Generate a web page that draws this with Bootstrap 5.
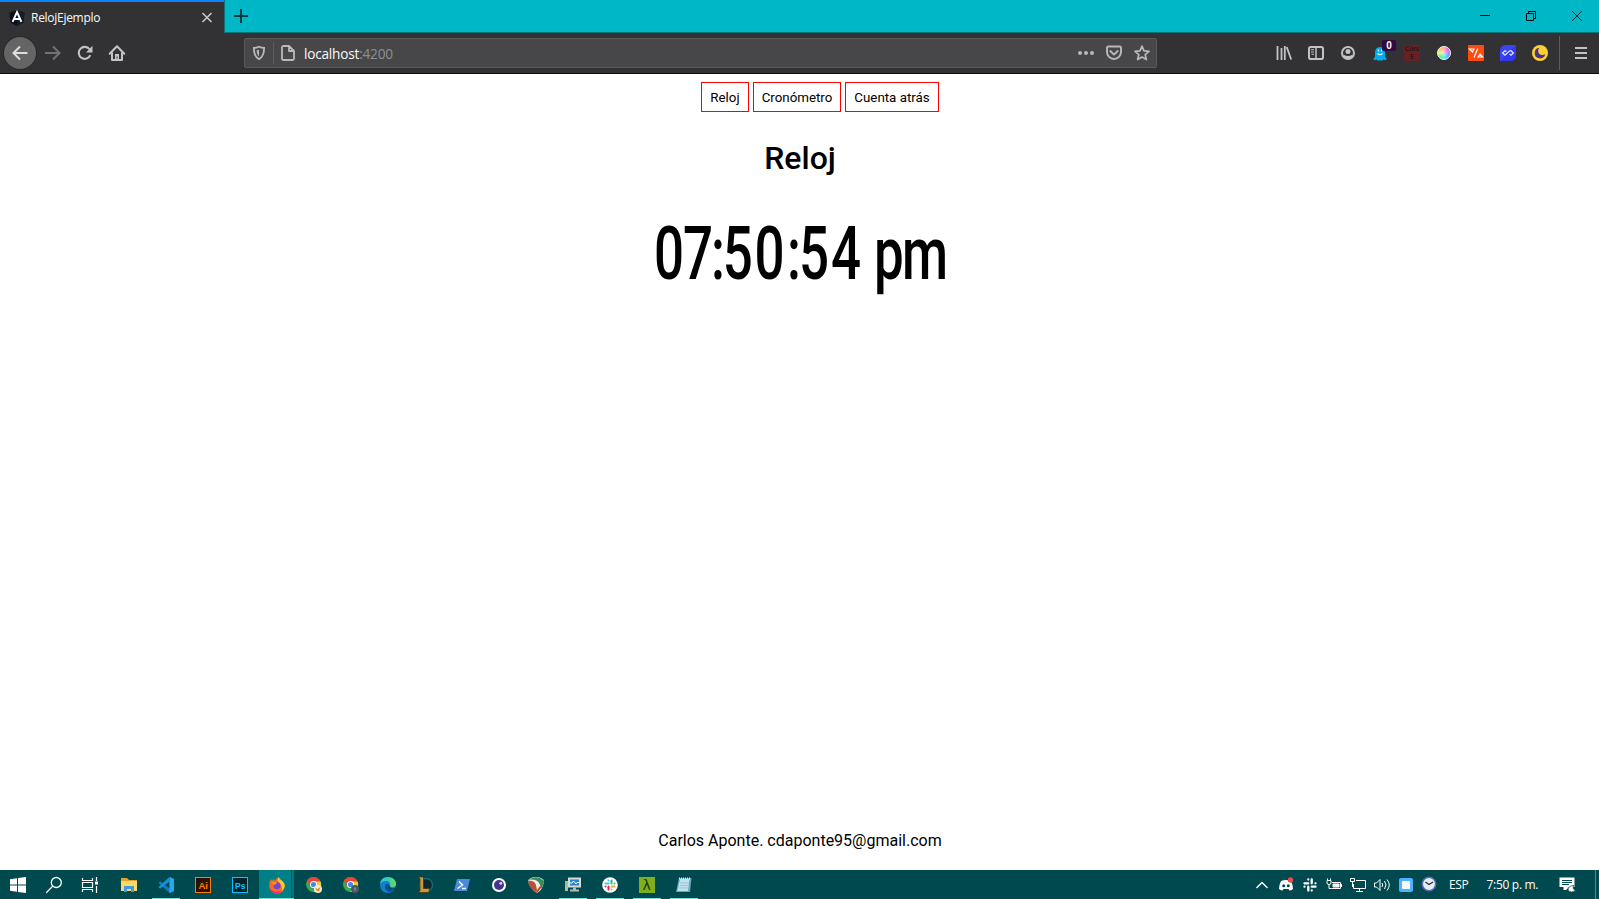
<!DOCTYPE html>
<html lang="es">
<head>
<meta charset="utf-8">
<title>RelojEjemplo</title>
<link href="https://cdn.jsdelivr.net/npm/bootstrap@5.3.0/dist/css/bootstrap.min.css" rel="stylesheet">
<script src="https://cdn.jsdelivr.net/npm/bootstrap@5.3.0/dist/js/bootstrap.bundle.min.js"></script>
<style>
body{font-family:Roboto,"Liberation Sans",sans-serif;color:#000;background:#fff}
svg{display:block;flex:none;overflow:visible}
.ui{font-family:"Open Sans","Noto Sans",sans-serif}
.titlebar{height:33px;background:#00b7c7;border-bottom:1px solid #107177}
.tab-active{width:224px;height:33px;background:#323234;border-top:2px solid #0a84ff;color:#f9f9fa;font-size:12px;padding-left:9px}
.tab-name{letter-spacing:-.28px;margin-left:6px;line-height:30px}
.tab-close{margin-right:7px}
.newtab{width:33px;height:32px;border-left:1px solid #107177}
.win-btn{width:46px;height:32px}
.toolbar{height:41px;background:#323234;border-bottom:1px solid #0c0c0d;color:#c3c3c5}
.tool{width:32px;height:32px;flex:none}
.tool-wide{width:33px;padding-right:1px}
.back-btn{background:#656566;border-radius:50%;box-shadow:0 0 0 1px #29292b}
.urlbar{width:913px;height:30px;margin-left:111px;background:#474749;border:1px solid #5a5a5c;border-radius:2px;color:#b9b9bb}
.url-text{font-size:13.600px;letter-spacing:-.2px;line-height:28px;color:#f9f9fa;margin-left:9px;padding-top:1px}
.url-text span{color:#8f8f91}
.rule{width:1px;background:#5d5d5f;flex:none}
.count{position:absolute;left:18px;top:3px;width:14px;height:11px;background:#300a40;border-radius:2px;color:#fff;font:bold 10px/11px "Liberation Sans",sans-serif;text-align:center}
.cors{width:16px;height:16px;background:#652224;color:#180b0c;font:6.500px/8px "DejaVu Sans",sans-serif;letter-spacing:-.2px;text-align:center}
.menu-btn{border:1px solid #f00;border-radius:0;background:#fff;color:#000;font-size:13.333px;line-height:16px;padding:7px 0 5px;height:30px;white-space:nowrap}
.menu-row{padding:8px 0 0 40px;gap:4px}
.page-title{font-size:32px;font-weight:500;line-height:38px;margin:27px 0 0}
.face{margin-top:32px}
.author{font-size:16px;line-height:19px;margin-bottom:20px}
.page{padding-left:1px}
.taskbar{height:29px;background:#004a4f;color:#fff;font-size:12px}
.task{width:37px;height:29px;flex:none;padding-right:1px}
.task-narrow{width:36px;padding-right:0}
.running{background:linear-gradient(#76e3e3,#76e3e3) 4px 28px/28px 1px no-repeat}
.current{background:linear-gradient(#76e3e3,#76e3e3) 0 28px/35px 1px no-repeat,linear-gradient(90deg,#008086 32px,#00585c 32px,#00585c 33px,#00777c 33px) 0 0/35px 29px no-repeat}
.tray{width:24px;height:29px;flex:none}
</style>
</head>
<body>
<div class="d-flex flex-column vh-100 overflow-hidden">

<header class="ui titlebar d-flex">
  <div class="tab-active d-flex align-items-center">
    <svg width="16" height="16" viewBox="0 0 16 16"><path d="M8 0l7.500 2.700-1.100 10L8 16l-6.400-3.300L.5 2.700z" fill="#0b1019"/><path d="M8 0l7.500 2.700-1.100 10L8 16z" fill="#161d2a"/><path d="M3.600 11.800L8 2l4.400 9.800M5.500 9h5" fill="none" stroke="#fff" stroke-width="1.900"/></svg>
    <span class="tab-name flex-grow-1">RelojEjemplo</span>
    <svg class="tab-close" width="20" height="20" viewBox="0 0 20 20"><path d="M5.500 5l9 9m0-9l-9 9" stroke="#c8c8ca" stroke-width="1.600"/></svg>
  </div>
  <div class="newtab d-flex align-items-center justify-content-center"><svg width="14" height="14" viewBox="0 0 14 14"><path d="M0 7h14M7 0v14" stroke="#06383c" stroke-width="1.900"/></svg></div>
  <div class="d-flex ms-auto">
    <div class="win-btn d-flex align-items-center justify-content-center"><svg width="10" height="10"><path d="M1 4.500h10" stroke="#000"/></svg></div>
    <div class="win-btn d-flex align-items-center justify-content-center"><svg width="10" height="10"><path d="M1.500 2.500h7v7h-7zM3.500 2.500v-2h7v7h-2" fill="none" stroke="#000"/></svg></div>
    <div class="win-btn d-flex align-items-center justify-content-center"><svg width="10" height="10"><path d="M1 0l10 10M11 0L1 10" stroke="#00282b"/></svg></div>
  </div>
</header>

<nav class="ui toolbar d-flex align-items-center flex-shrink-0">
  <div class="tool back-btn d-flex align-items-center justify-content-center ms-1"><svg width="16" height="16" viewBox="0 0 16 16"><path d="M15.500 8H1.500M8 1.500L1.500 8 8 14.500" fill="none" stroke="#dededf" stroke-width="2"/></svg></div>
  <div class="tool tool-wide d-flex align-items-center justify-content-center"><svg width="16" height="16" viewBox="0 0 16 16"><path d="M1 8h14M9 1.500L15.500 8 9 14.500" fill="none" stroke="#737375" stroke-width="2"/></svg></div>
  <div class="tool d-flex align-items-center justify-content-center"><svg width="16" height="16" viewBox="0 0 16 16"><path d="M13.300 10.200A6 6 0 1 1 12.500 4.200" fill="none" stroke="currentColor" stroke-width="2.100"/><path d="M15.500 .8v6.700H9z" fill="currentColor"/></svg></div>
  <div class="tool d-flex align-items-center justify-content-center"><svg width="16" height="16" viewBox="0 0 16 16"><path d="M.7 8.700L8 1.200l7.300 7.500M3 7.500V15h10V7.500" fill="none" stroke="currentColor" stroke-width="2" stroke-linejoin="round" stroke-linecap="round"/><path d="M6 9h4v6H6z" fill="currentColor"/><path d="M8 11.500v2" stroke="#323234"/></svg></div>

  <div class="urlbar d-flex align-items-center">
    <svg class="ms-2" width="12" height="14" viewBox="0 0 12 14"><path d="M6 .8C4 1.700 2 2 .9 2c0 5 .6 8.800 5.100 11.100C10.500 10.800 11.100 7 11.100 2 10 2 8 1.700 6 .8z" fill="none" stroke="currentColor" stroke-width="1.800"/><path d="M6 3.700v6.500C4.200 9 3.700 7 3.700 4.200z" fill="currentColor"/></svg>
    <div class="rule ms-2" style="height:22px"></div>
    <svg style="margin-left:7px" width="14" height="16" viewBox="0 0 14 16"><path d="M1 2.500Q1 1 2.500 1H8l5 5v7.500q0 1.500-1.500 1.500h-9Q1 15 1 13.500zM8 1v5h5" fill="none" stroke="currentColor" stroke-width="1.800" stroke-linejoin="round"/></svg>
    <div class="url-text flex-grow-1">localhost<span>:4200</span></div>
    <svg width="16" height="16" viewBox="0 0 16 16" fill="currentColor"><circle cx="2" cy="8" r="2"/><circle cx="8" cy="8" r="2"/><circle cx="14" cy="8" r="2"/></svg>
    <svg style="margin:0 12px" width="16" height="16" viewBox="0 0 16 16" fill="none" stroke="currentColor" stroke-width="1.900"><path d="M2.200 1.500h11.600q1.200 0 1.200 1.200V7A7 7 0 0 1 1 7V2.700Q1 1.500 2.200 1.500z"/><path d="M4.300 6L8 9.600 11.700 6" stroke-linecap="round" stroke-linejoin="round"/></svg>
    <svg style="margin-right:6px" width="16" height="16" viewBox="0 0 16 16"><path d="M8 1.200l2 4.700 5 .4-3.800 3.300 1.200 5L8 12l-4.400 2.600 1.200-5L1 6.300l5-.4z" fill="none" stroke="currentColor" stroke-width="1.700" stroke-linejoin="round"/></svg>
  </div>

  <div class="d-flex align-items-center ms-auto">
    <div class="tool d-flex align-items-center justify-content-center"><svg width="16" height="16" viewBox="0 0 16 16"><path d="M1.500 1v14M5.500 3v12M8.800 1v14M10.700 2l4.500 12.500" stroke="currentColor" stroke-width="1.800" fill="none"/></svg></div>
    <div class="tool d-flex align-items-center justify-content-center"><svg width="16" height="16" viewBox="0 0 16 16"><rect x="1" y="2" width="14" height="12" rx="1.800" fill="none" stroke="currentColor" stroke-width="2"/><path d="M8 2v12" stroke="currentColor" stroke-width="1.500"/><path d="M3 4.700h3M3 7h3M3.500 9.300H6" stroke="currentColor"/></svg></div>
    <div class="tool d-flex align-items-center justify-content-center"><svg width="14" height="14" viewBox="0 0 14 14"><circle cx="7" cy="7" r="6" fill="none" stroke="currentColor" stroke-width="2"/><circle cx="7" cy="5.500" r="2.500" fill="currentColor"/><path d="M2.500 8.500Q7 11.500 11.500 8.500L11 11.500 7 13 3 11.500z" fill="currentColor"/></svg></div>
    <div class="tool d-flex align-items-center justify-content-center position-relative"><svg width="14" height="15" viewBox="0 0 14 15"><path d="M2 7Q2 1 7 1t5 6v4q2 1 1.500 2.500-1.500 1-3 0-1.500 2-3.500.5-2 1.500-3.500-.5-1.500 1-3 0Q0 12 2 11z" fill="#00aef0"/><path d="M5.500 3.500v2M8.500 3.500v2M4.500 7.500Q7 9.800 9.500 7.500" stroke="#e8fbff" stroke-width="1.200" fill="none"/></svg><span class="count">0</span></div>
    <div class="tool d-flex align-items-center justify-content-center"><div class="cors">Cors<br>E</div></div>
    <div class="tool d-flex align-items-center justify-content-center"><div class="rounded-circle" style="width:14px;height:14px;border:1px solid #fff;background:radial-gradient(#fff9 0 10%,#fff0 75%),conic-gradient(#f98,#f4e,#96ff,#4af,#3ee,#4e6,#cf5,#fb5,#f98)"></div></div>
    <div class="tool d-flex align-items-center justify-content-center"><svg width="16" height="16" viewBox="0 0 16 16"><rect width="16" height="16" rx="1" fill="#ff4a10"/><path d="M1.500 4h4.500L4.500 7zM9.800 3.500L6 12.500M10 12L12 9l2.500 3z" fill="none" stroke="#fff" stroke-width="1.200"/></svg></div>
    <div class="tool d-flex align-items-center justify-content-center"><svg width="16" height="16" viewBox="0 0 16 16"><path d="M6 0h10v10q0 6-6 6H0V6q0-6 6-6z" fill="#3b45f3"/><path d="M16 0v10q0 6-6 6H0z" fill="#2a2de8" opacity=".55"/><path d="M6.500 6.500L5 5.800 2.600 8 5 10.200 9.500 6 11 5.700 13.400 8 11 10.200 9.500 9" fill="none" stroke="#dfe2ff" stroke-width="1.300"/></svg></div>
    <div class="tool d-flex align-items-center justify-content-center"><svg width="16" height="16" viewBox="0 0 16 16"><circle cx="8" cy="8" r="8" fill="#fdd22f"/><path d="M7.500 2.800A5.300 5.300 0 1 0 13.200 9 3.900 3.900 0 1 1 7.500 2.800z" fill="#49308c"/></svg></div>
    <div class="rule" style="height:34px;margin:0 5px 0 3px"></div>
    <div class="tool d-flex align-items-center justify-content-center"><svg width="12" height="14" viewBox="0 0 12 14"><path d="M0 2h12M0 7h12M0 12h12" stroke="currentColor" stroke-width="2"/></svg></div>
    <div style="width:2px"></div>
  </div>
</nav>

<main class="page d-flex flex-column align-items-center flex-grow-1">
  <nav class="menu-row d-flex">
    <button class="menu-btn" style="width:48px">Reloj</button>
    <button class="menu-btn" style="width:88px">Cronómetro</button>
    <button class="menu-btn" style="width:94px">Cuenta atrás</button>
  </nav>
  <h1 class="page-title">Reloj</h1>
  <svg class="face" width="300" height="95" viewBox="0 0 300 95" font-family="Roboto, sans-serif" font-size="74.500" font-weight="500"><text transform="scale(.71 1)" y="70" x="5.600 46.500 86 102.500 147.200 193 209.900 255 299 315.500 354.800">07:50:54 pm</text></svg>
  <footer class="author mt-auto">Carlos Aponte. cdaponte95@gmail.com</footer>
</main>

<div class="ui taskbar d-flex align-items-center flex-shrink-0">
  <div class="task task-narrow d-flex align-items-center justify-content-center"><svg width="16" height="16" viewBox="0 0 16 16"><path d="M0 2.300L7 1.300V7.500H0zM8 1.100L16 0v7.500H8zM0 8.500h7v6.200l-7-1zM8 8.500h8V16l-8-1.100z" fill="#fff"/></svg></div>
  <div class="task task-narrow d-flex align-items-center justify-content-center"><svg width="16" height="16" viewBox="0 0 16 16"><circle cx="10.300" cy="5.500" r="5" fill="none" stroke="#fff" stroke-width="1.300"/><path d="M6.700 9.100L.3 15.700" stroke="#fff" stroke-width="1.300"/></svg></div>
  <div class="task task-narrow d-flex align-items-center justify-content-center" style="margin-right:3px"><svg width="16" height="16" viewBox="0 0 16 16" fill="none" stroke="#fff"><path d="M.5 1v2.500h10V1M.5 15v-2.500h10V15M.5 5.500h10v5H.5zM14.500 0v4M14.500 9v7" stroke-width="1.200"/><path d="M13 6h3" stroke-width="3"/></svg></div>
  <div class="task d-flex align-items-center justify-content-center"><svg width="16" height="14" viewBox="0 0 16 14"><path d="M0 0h6l2 2h8v11H0z" fill="#e5a32c"/><path d="M0 3h16v10H0z" fill="#fed969"/><path d="M3 14V8h10v6h-3v-3H6v3z" fill="#3f9ce0"/></svg></div>
  <div class="task running d-flex align-items-center justify-content-center"><svg width="16" height="16" viewBox="0 0 16 16"><path d="M11.500 0L16 2v12l-4.500 2L.5 6 2 4.300l9.500 7z" fill="#1279be"/><path d="M11.500 0L16 2v12l-4.500 2z" fill="#29a8ee"/><path d="M11.500 0v4.500L2 11.700.5 10z" fill="#1591dc"/></svg></div>
  <div class="task d-flex align-items-center justify-content-center"><svg width="16" height="16"><rect x=".5" y=".5" width="15" height="15" fill="#2a1300" stroke="#ff7c00"/><text x="3.500" y="11.500" font-family="Liberation Sans, sans-serif" font-size="9.500" font-weight="bold" fill="#ff7c00">Ai</text></svg></div>
  <div class="task d-flex align-items-center justify-content-center"><svg width="16" height="16"><rect x=".5" y=".5" width="15" height="15" fill="#04202b" stroke="#00c8ff"/><text x="3" y="11.500" font-family="Liberation Sans, sans-serif" font-size="8.500" font-weight="bold" fill="#00c8ff">Ps</text></svg></div>
  <div class="task current d-flex align-items-center justify-content-center"><svg width="16" height="16" viewBox="0 0 16 16"><path d="M2 2l1 2 2-2 1 2q1-3 4-4 0 2 2 3 4 3 3.700 6A7.700 7.700 0 0 1 .3 9Q0 5 2 2z" fill="#ff6a1c"/><path d="M10 0q0 2 2 3 4 3 3.700 6c-.5 3-2 4-3 5 1-6-1-7-4-10q0-3 1.300-4z" fill="#ffc72b"/><path d="M.3 9q1 4 5 5.500 4 1 7-1Q10 17 6 16 1 15 .3 9z" fill="#f5227c"/><circle cx="8" cy="8.800" r="3.500" fill="#7146d6"/><path d="M2.500 6Q6 4 8 6.500L5 8z" fill="#ff9a1c"/></svg></div>
  <div class="task d-flex align-items-center justify-content-center"><svg width="16" height="16" viewBox="0 0 16 16"><circle cx="7.500" cy="7.500" r="7.500" fill="#39a852"/><path d="M1 3.800A7.500 7.500 0 0 1 14.500 4.500L7.500 7.500 4.500 9z" fill="#e94436"/><path d="M7.500 4.500h7A7.500 7.500 0 0 1 7.500 15l3-6z" fill="#fcc934"/><circle cx="7.500" cy="7.500" r="3.500" fill="#fff"/><circle cx="7.500" cy="7.500" r="2.600" fill="#4787ed"/><circle cx="12" cy="12" r="4" fill="#f6e9c9"/><path d="M9 11l2.500 1 3-2-1.500 4h-2z" fill="#e98722"/></svg></div>
  <div class="task d-flex align-items-center justify-content-center"><svg width="16" height="16" viewBox="0 0 16 16"><circle cx="7.500" cy="7.500" r="7.500" fill="#39a852"/><path d="M1 3.800A7.500 7.500 0 0 1 14.500 4.500L7.500 7.500 4.500 9z" fill="#e94436"/><path d="M7.500 4.500h7A7.500 7.500 0 0 1 7.500 15l3-6z" fill="#fcc934"/><circle cx="7.500" cy="7.500" r="3.500" fill="#fff"/><circle cx="7.500" cy="7.500" r="2.600" fill="#4787ed"/><circle cx="12" cy="12" r="4" fill="#465963"/><path d="M11 10.500h2v3h-2z" fill="#74868f"/></svg></div>
  <div class="task d-flex align-items-center justify-content-center"><svg width="16" height="16" viewBox="0 0 16 16"><circle cx="8" cy="8" r="8" fill="#1380cc"/><path d="M0 7Q1 0 8 0q8 1 8 7c0 4-6 4-6 1Q10 4 6 4 2 4 0 7z" fill="#38c7c8"/><path d="M10 .4Q16 2 16 7c0 3-4 4-6 2 2-3 0-6 0-8.600z" fill="#59d66b"/><path d="M6 7Q3 12 9 15q4 0 6-3-7 2-7-3l1-2z" fill="#0c4f9c"/><path d="M9.500 8Q9 11 13 11.500l3-1-1 2Q8 14 8 9z" fill="#004a4f"/></svg></div>
  <div class="task d-flex align-items-center justify-content-center"><svg width="16" height="16" viewBox="0 0 16 16"><circle cx="9" cy="8" r="6.500" fill="#0b2930" stroke="#166d82" stroke-width="1.300"/><path d="M1.500 0h5v11.500h6.500l-1.500 4H1.500l1.500-2V2z" fill="#c99a3c" stroke="#3f2c12" stroke-width=".7"/></svg></div>
  <div class="task d-flex align-items-center justify-content-center"><svg width="16" height="12" viewBox="0 0 16 12"><path d="M3 0h13l-3 12H0z" fill="#4b89dd"/><path d="M5 2.500L8.500 6 3.500 9.500M8 9.500h4" fill="none" stroke="#fff" stroke-width="1.400"/></svg></div>
  <div class="task d-flex align-items-center justify-content-center"><svg width="14" height="14" viewBox="0 0 14 14"><circle cx="7" cy="7" r="7" fill="#fff"/><circle cx="7" cy="7" r="5" fill="#44338d"/><circle cx="8.800" cy="5.200" r="1.500" fill="#cfc9ee"/></svg></div>
  <div class="task d-flex align-items-center justify-content-center"><svg width="16" height="16" viewBox="0 0 16 16"><path d="M0 4Q2 0 8 0q6 0 8 4-1 9-7 12Q2 12 0 4z" fill="#f1ece5"/><path d="M1 3Q5-1 12 1l4 3q0 3-3 8-1-8-6-9Q4 2 1 3z" fill="#398d5b"/><path d="M0 4Q6 3 8 8q1 4 1 8Q1 11 0 4z" fill="#b94f35"/><path d="M12 9l2 1-5 6v-3z" fill="#b94f35"/></svg></div>
  <div class="task running d-flex align-items-center justify-content-center"><svg width="16" height="15" viewBox="0 0 16 15"><path d="M3 .5h13v10H3z" fill="#d7dad7"/><path d="M5 2.500h9v6H5z" fill="#2387cd"/><path d="M5 6h2l1.500-2L11 7l1-1.500h2" stroke="#fff" fill="none"/><path d="M8 10.500h3v2h3v2H5v-2h3zM0 4h3v10H0z" fill="#b5b9b5"/><path d="M1 5v3" stroke="#51db58"/></svg></div>
  <div class="task running d-flex align-items-center justify-content-center"><svg width="16" height="16" viewBox="0 0 16 16"><circle cx="8" cy="8" r="7.800" fill="#fff"/><g stroke-width="2" stroke-linecap="round"><path d="M6.500 3.500v0M3.500 6.500h3" stroke="#36c5f0"/><path d="M9.500 3.500v3M12.500 6.500v0" stroke="#2eb67d"/><path d="M9.500 9.500h3M9.500 12.500v0" stroke="#ecb22e"/><path d="M3.500 9.500v0M6.500 9.500v3" stroke="#e01e5a"/></g></svg></div>
  <div class="task running d-flex align-items-center justify-content-center"><svg width="16" height="16"><path d="M0 0h16v16H0z" fill="#81ae1b"/><text x="3.500" y="13" font-family="DejaVu Sans, sans-serif" font-size="14" fill="#1d3305">λ</text></svg></div>
  <div class="task running d-flex align-items-center justify-content-center"><svg width="16" height="16" viewBox="0 0 16 16"><path d="M3 1h12.500l-1.500 14H0z" fill="#6aa7bd"/><path d="M4 2h9.500L12 14H1.500z" fill="#bfe2ee"/><path d="M4 6h9M4 8.500h9M3 11h9" stroke="#93c6d8"/><path d="M3 1.500h12" stroke="#e9e2d0" stroke-width="2" stroke-dasharray="1 1"/></svg></div>

  <div class="d-flex align-items-center ms-auto">
    <div class="tray d-flex align-items-center justify-content-center"><svg width="12" height="8"><path d="M.5 7L6 1.500 11.500 7" fill="none" stroke="#fff" stroke-width="1.300"/></svg></div>
    <div class="tray d-flex align-items-center justify-content-center"><svg width="14" height="14" viewBox="0 0 14 14"><path d="M2 3Q7 1 12 3q2 4 2 8-2 1.500-3.500 1.500l-1-1.500h-5l-1 1.500Q2 12.500 0 11 0 7 2 3z" fill="#fff"/><circle cx="4.700" cy="7.700" r="1.500" fill="#004a4f"/><circle cx="9.300" cy="7.700" r="1.500" fill="#004a4f"/><circle cx="11.500" cy="2" r="2.700" fill="#f04747"/></svg></div>
    <div class="tray d-flex align-items-center justify-content-center"><svg width="14" height="14" viewBox="0 0 14 14"><path d="M5.300 1.500v0M1.500 5.300h3.800M8.700 1.500v3.800M12.500 5.300v0M8.700 8.700h3.800M8.700 12.500v0M1.500 8.700v0M5.300 8.700v3.800" stroke="#fff" stroke-width="2.300" stroke-linecap="round"/></svg></div>
    <div class="tray d-flex align-items-center justify-content-center"><svg width="16" height="11" viewBox="0 0 16 11" fill="none" stroke="#fff"><path d="M6 3.500h8.500v6h-9M15.500 5v3"/><path d="M7 5h6v3H7z" fill="#fff"/><path d="M1 1.500h4V4Q5 5.500 3 5.500T1 4zM1.500-.5v2M4.500-.5v2M3 5.500v4h2.500"/></svg></div>
    <div class="tray d-flex align-items-center justify-content-center"><svg width="16" height="14" viewBox="0 0 16 14" fill="none" stroke="#fff"><path d="M6 2.500h9.500v8h-12V6M9.500 11v2.500M6 13.500h7M.5.500h4v3h-4zM2.500 4v5"/></svg></div>
    <div class="tray d-flex align-items-center justify-content-center"><svg width="16" height="14" viewBox="0 0 16 14" fill="none" stroke="#fff"><path d="M.5 5v4h2L6 12.500v-11L2.500 5zM8 5q1.500 2 0 4M10.500 3q3 4 0 8M13 1.500q4.500 5.500 0 11"/></svg></div>
    <div class="tray d-flex align-items-center justify-content-center"><svg width="14" height="14"><rect width="14" height="14" rx="2" fill="#4eb2ff"/><rect x="3" y="3" width="8" height="8" rx="1" fill="#f5fbff"/></svg></div>
    <div class="tray d-flex align-items-center justify-content-center pe-1"><svg width="15" height="15" viewBox="0 0 15 15"><circle cx="8" cy="7" r="6.700" fill="#e8edf2" stroke="#536dad" stroke-width="1.500"/><path d="M4.500 5L8 7.500l4-2.500" fill="none" stroke="#222c49" stroke-width="1.300"/></svg></div>
    <span style="width:31px;padding-left:7px;letter-spacing:-.4px">ESP</span>
    <span style="width:68px;padding-left:13.500px;letter-spacing:-.3px;white-space:nowrap">7:50 p.&nbsp;m.</span>
    <div class="d-flex align-items-center justify-content-center" style="width:53px"><svg width="17" height="16" viewBox="0 0 17 16"><path d="M.5 .5h15v9.500h-5.500L7 13H4.500v-3h-4z" fill="#fff"/><path d="M3 3.500h10M3 5.500h10M3 7.500h7" stroke="#004a4f"/><path d="M9 13.500q0-5 6-5-2.500 3 1.500 5-4 3-7.500 0z" fill="#fff" stroke="#004a4f" stroke-width=".7"/></svg></div>
    <div class="rule" style="height:29px;margin-left:1px;margin-right:3px;background:#568589"></div>
  </div>
</div>
</div>
</body>
</html>
